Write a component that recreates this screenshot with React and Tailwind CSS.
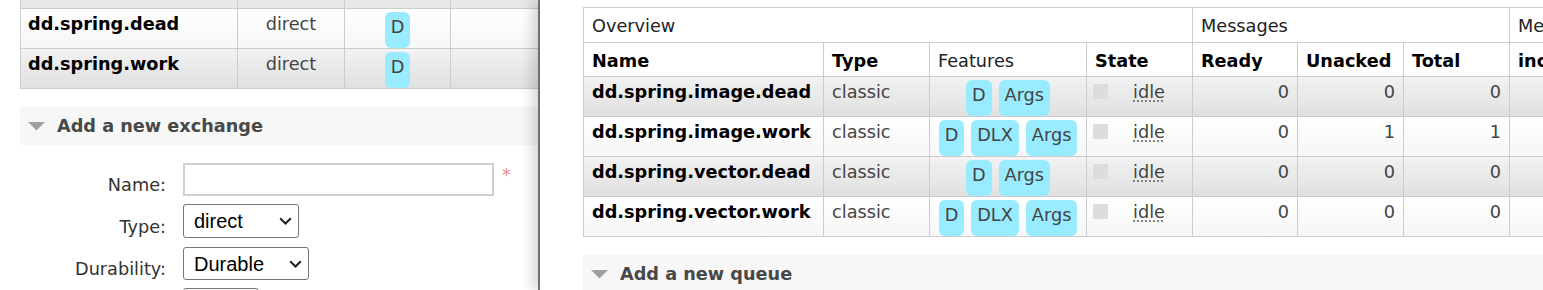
import React from "react";

const alt1 = "bg-linear-to-b from-white to-[#f6f6f6]";
const alt2 = "bg-linear-to-b from-[#f2f2f2] to-[#e0e0e0]";
const cell = "border-r border-b border-[#cccccc]";

const exchanges = [
    { name: "dd.spring.dead", type: "direct", row: alt1 },
    { name: "dd.spring.work", type: "direct", row: alt2 },
];

const queues = [
    { name: "dd.spring.image.dead", features: ["D", "Args"], ready: 0, unacked: 0, total: 0 },
    { name: "dd.spring.image.work", features: ["D", "DLX", "Args"], ready: 0, unacked: 1, total: 1 },
    { name: "dd.spring.vector.dead", features: ["D", "Args"], ready: 0, unacked: 0, total: 0 },
    { name: "dd.spring.vector.work", features: ["D", "DLX", "Args"], ready: 0, unacked: 0, total: 0 },
];

function Badge({ children }) {
    return (
        <span className="rounded-[6px] bg-[#99ebff] px-[6px] pt-[6px] pb-[3px] leading-[18px] text-[#444444]">
            {children}
        </span>
    );
}

function Arrow() {
    return (
        <svg width="17" height="9" viewBox="0 0 17 9" className="shrink-0">
            <path d="M0 0 H17 L8.5 8.5 Z" fill="#a0a0a0" />
        </svg>
    );
}

function Section({ title, className }) {
    return (
        <div className={`flex h-[38px] items-center gap-[12px] bg-[#f7f7f7] pl-[8px] ${className}`}>
            <Arrow />
            <span className="font-bold text-[#484848]">{title}</span>
        </div>
    );
}

function Chevron() {
    return (
        <svg width="13" height="8" viewBox="0 0 13 8" className="pointer-events-none absolute top-[13px] right-[7px]">
            <path d="M1.2 1.2 L6.5 6.5 L11.8 1.2" fill="none" stroke="#1f1f1f" strokeWidth="2" />
        </svg>
    );
}

function Select({ value, width, height }) {
    return (
        <div className={`relative ${width} ${height}`}>
            <select
                defaultValue={value}
                className="h-full w-full appearance-none rounded-[3px] border border-[#767676] bg-white pl-[10px] font-['Liberation_Sans',Arial,sans-serif] text-[20px] text-black"
            >
                <option>{value}</option>
            </select>
            <Chevron />
        </div>
    );
}

function FormRow({ label, children, className = "" }) {
    return (
        <div className={`flex items-end ${className}`}>
            <label className="w-[166px] text-right text-[#333333]">{label}</label>
            <div className="ml-[17px] flex items-start">{children}</div>
        </div>
    );
}

function ExchangesPanel() {
    return (
        <div className="w-[538px] shrink-0 overflow-hidden bg-white">
            <div className="ml-[20px] grid w-max grid-cols-[217px_107px_106px_106px] border-l border-[#cccccc]">
                {[0, 1, 2, 3].map((i) => (
                    <div key={i} className={`h-[9px] bg-[#e8e8e8] ${cell}`} />
                ))}
                {exchanges.map((ex) => (
                    <React.Fragment key={ex.name}>
                        <div className={`h-[40px] pt-[4px] pl-[7px] font-bold text-black ${cell} ${ex.row}`}>{ex.name}</div>
                        <div className={`pt-[4px] text-center text-[#444444] ${cell} ${ex.row}`}>{ex.type}</div>
                        <div className={`flex justify-center pt-[3px] ${cell} ${ex.row}`}>
                            <Badge>D</Badge>
                        </div>
                        <div className={`${cell} ${ex.row}`} />
                    </React.Fragment>
                ))}
            </div>

            <Section title="Add a new exchange" className="mt-[18px] ml-[20px]" />

            <div className="mt-[18px] flex flex-col">
                <FormRow label="Name:">
                    <input type="text" className="h-[33px] w-[311px] border-2 border-[#d0d0d0] bg-white" />
                    <span className="ml-[8px] mt-[1px] text-[#f08a8a]">*</span>
                </FormRow>
                <FormRow label="Type:" className="mt-[8px]">
                    <Select value="direct" width="w-[116px]" height="h-[34px]" />
                </FormRow>
                <FormRow label="Durability:" className="mt-[9px]">
                    <Select value="Durable" width="w-[126px]" height="h-[33px]" />
                </FormRow>
                <FormRow label="" className="mt-[8px]">
                    <div className="h-[33px] w-[76px] rounded-[3px] border border-[#767676] bg-white" />
                </FormRow>
            </div>
        </div>
    );
}

function QueuesPanel() {
    return (
        <div className="relative z-10 min-w-0 flex-1 overflow-hidden border-l-2 border-[#707070] bg-white shadow-[-6px_0_12px_rgba(0,0,0,0.16)]">
            <div className="mt-[7px] ml-[43px] grid w-max grid-cols-[240px_106px_157px_106px_105px_106px_106px_106px] border-t border-l border-[#cccccc]">
                <div className={`col-span-4 h-[35px] pt-[7px] pl-[8px] text-[#222222] ${cell}`}>Overview</div>
                <div className={`col-span-3 pt-[7px] pl-[8px] text-[#222222] ${cell}`}>Messages</div>
                <div className={`pt-[7px] pl-[8px] whitespace-nowrap text-[#222222] ${cell}`}>Message rates</div>

                <div className={`h-[34px] pt-[7px] pl-[8px] font-bold text-black ${cell}`}>Name</div>
                <div className={`pt-[7px] pl-[8px] font-bold text-black ${cell}`}>Type</div>
                <div className={`pt-[7px] pl-[8px] text-[#222222] ${cell}`}>Features</div>
                <div className={`pt-[7px] pl-[8px] font-bold text-black ${cell}`}>State</div>
                <div className={`pt-[7px] pl-[8px] font-bold text-black ${cell}`}>Ready</div>
                <div className={`pt-[7px] pl-[8px] font-bold text-black ${cell}`}>Unacked</div>
                <div className={`pt-[7px] pl-[8px] font-bold text-black ${cell}`}>Total</div>
                <div className={`pt-[7px] pl-[8px] whitespace-nowrap font-bold text-black ${cell}`}>incoming</div>

                {queues.map((q, i) => {
                    const row = i % 2 === 0 ? alt2 : alt1;
                    return (
                        <React.Fragment key={q.name}>
                            <div className={`h-[40px] pt-[4px] pl-[8px] font-bold text-black ${cell} ${row}`}>{q.name}</div>
                            <div className={`pt-[4px] pl-[8px] text-[#444444] ${cell} ${row}`}>classic</div>
                            <div className={`flex justify-center gap-[7px] pt-[3px] ${cell} ${row}`}>
                                {q.features.map((f) => (
                                    <Badge key={f}>{f}</Badge>
                                ))}
                            </div>
                            <div className={`flex items-start pt-[4px] pl-[6px] ${cell} ${row}`}>
                                <span className="mt-[3px] h-[15px] w-[15px] bg-[#dddddd]" />
                                <span className="ml-[25px] text-[#444444] underline decoration-dotted decoration-[#777777] underline-offset-[3px]">
                                    idle
                                </span>
                            </div>
                            <div className={`pt-[4px] pr-[8px] text-right text-[#444444] ${cell} ${row}`}>{q.ready}</div>
                            <div className={`pt-[4px] pr-[8px] text-right text-[#444444] ${cell} ${row}`}>{q.unacked}</div>
                            <div className={`pt-[4px] pr-[8px] text-right text-[#444444] ${cell} ${row}`}>{q.total}</div>
                            <div className={`${cell} ${row}`} />
                        </React.Fragment>
                    );
                })}
            </div>

            <Section title="Add a new queue" className="mt-[18px] ml-[43px]" />
        </div>
    );
}

export default function App() {
    return (
        <div className="flex h-[290px] w-[1543px] overflow-hidden bg-white font-['DejaVu_Sans',Verdana,sans-serif] text-[17.7px] leading-[22px]">
            <ExchangesPanel />
            <QueuesPanel />
        </div>
    );
}
